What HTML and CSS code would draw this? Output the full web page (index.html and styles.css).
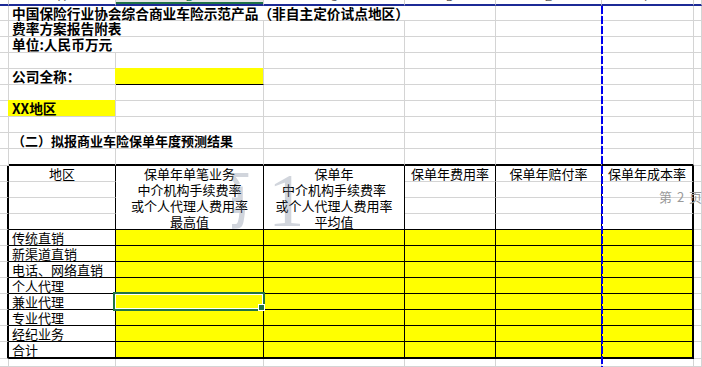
FILE: index.html
```html
<!DOCTYPE html>
<html lang="zh-CN">
<head>
<meta charset="utf-8">
<title>费率方案报告附表</title>
<link rel="stylesheet" href="styles.css">
</head>
<body>
<div class="sheet">
  <!-- column header strip -->
  <div class="c h"></div>
  <div class="c h"><span>A</span></div>
  <div class="c h selcol"><span>B</span></div>
  <div class="c h"><span>C</span></div>
  <div class="c h"><span>D</span></div>
  <div class="c h"><span>E</span></div>
  <div class="c h"><span>F</span></div>
  <div class="c h"></div>

  <!-- row 1 -->
  <div class="c"></div>
  <div class="c w4 t">中国保险行业协会综合商业车险示范产品（非自主定价试点地区）</div>
  <div class="c"></div><div class="c"></div><div class="c"></div>

  <!-- row 2 -->
  <div class="c"></div>
  <div class="c w2 t">费率方案报告附表</div>
  <div class="c"></div><div class="c"></div><div class="c"></div><div class="c"></div><div class="c"></div>

  <!-- row 3 -->
  <div class="c"></div>
  <div class="c w2 t">单位:人民币万元</div>
  <div class="c"></div><div class="c"></div><div class="c"></div><div class="c"></div><div class="c"></div>

  <!-- row 4 -->
  <div class="c"></div><div class="c"></div><div class="c"></div><div class="c"></div><div class="c"></div><div class="c"></div><div class="c"></div><div class="c"></div>

  <!-- row 5 -->
  <div class="c"></div>
  <div class="c t">公司全称：</div>
  <div class="c fo bb"></div>
  <div class="c"></div><div class="c"></div><div class="c"></div><div class="c"></div><div class="c"></div>

  <!-- row 6 -->
  <div class="c"></div><div class="c"></div><div class="c"></div><div class="c"></div><div class="c"></div><div class="c"></div><div class="c"></div><div class="c"></div>

  <!-- row 7 -->
  <div class="c"></div>
  <div class="c t fo">XX地区</div>
  <div class="c"></div><div class="c"></div><div class="c"></div><div class="c"></div><div class="c"></div><div class="c"></div>

  <!-- row 8 -->
  <div class="c"></div><div class="c"></div><div class="c"></div><div class="c"></div><div class="c"></div><div class="c"></div><div class="c"></div><div class="c"></div>

  <!-- row 9 -->
  <div class="c"></div>
  <div class="c w2 t s">（二）拟报商业车险保单年度预测结果</div>
  <div class="c"></div><div class="c"></div><div class="c"></div><div class="c"></div><div class="c"></div>

  <!-- row 10 (table top border) -->
  <div class="c"></div>
  <div class="c bb2"></div><div class="c bb2"></div><div class="c bb2"></div><div class="c bb2"></div><div class="c bb2"></div><div class="c bb2"></div>
  <div class="c"></div>

  <!-- table header rows 11-14 -->
  <div class="c tl"></div>
  <div class="c rb hd">地区</div>
  <div class="c m rb bb"><span>保单年单笔业务</span><span>中介机构手续费率</span><span>或个人代理人费用率</span><span>最高值</span></div>
  <div class="c m rb bb"><span>保单年</span><span>中介机构手续费率</span><span>或个人代理人费用率</span><span>平均值</span></div>
  <div class="c rb hd">保单年费用率</div>
  <div class="c rb hd">保单年赔付率</div>
  <div class="c rb2 hd">保单年成本率</div>
  <div class="c"></div>

  <div class="c tl"></div><div class="c rb"></div><div class="c rb"></div><div class="c rb"></div><div class="c rb2"></div><div class="c"></div>
  <div class="c tl"></div><div class="c rb"></div><div class="c rb"></div><div class="c rb"></div><div class="c rb2"></div><div class="c"></div>
  <div class="c tl"></div><div class="c rb bb"></div><div class="c rb bb"></div><div class="c rb bb"></div><div class="c rb2 bb"></div><div class="c"></div>

  <!-- data rows -->
  <div class="c tl"></div><div class="c rb bb lb">传统直销</div>
  <div class="c y rb bb"></div><div class="c y rb bb"></div><div class="c y rb bb"></div><div class="c y rb bb"></div><div class="c y rb2 bb"></div><div class="c"></div>

  <div class="c tl"></div><div class="c rb bb lb">新渠道直销</div>
  <div class="c y rb bb"></div><div class="c y rb bb"></div><div class="c y rb bb"></div><div class="c y rb bb"></div><div class="c y rb2 bb"></div><div class="c"></div>

  <div class="c tl"></div><div class="c rb bb lb">电话、网络直销</div>
  <div class="c y rb bb"></div><div class="c y rb bb"></div><div class="c y rb bb"></div><div class="c y rb bb"></div><div class="c y rb2 bb"></div><div class="c"></div>

  <div class="c tl"></div><div class="c rb bb lb">个人代理</div>
  <div class="c y rb bb"></div><div class="c y rb bb"></div><div class="c y rb bb"></div><div class="c y rb bb"></div><div class="c y rb2 bb"></div><div class="c"></div>

  <div class="c tl"></div><div class="c rb bb lb">兼业代理</div>
  <div class="c y rb bb cur"><span class="selbox"></span><span class="handle"></span></div><div class="c y rb bb"></div><div class="c y rb bb"></div><div class="c y rb bb"></div><div class="c y rb2 bb"></div><div class="c"></div>

  <div class="c tl"></div><div class="c rb bb lb">专业代理</div>
  <div class="c y rb bb"></div><div class="c y rb bb"></div><div class="c y rb bb"></div><div class="c y rb bb"></div><div class="c y rb2 bb"></div><div class="c"></div>

  <div class="c tl"></div><div class="c rb bb lb">经纪业务</div>
  <div class="c y rb bb"></div><div class="c y rb bb"></div><div class="c y rb bb"></div><div class="c y rb bb"></div><div class="c y rb2 bb"></div><div class="c"></div>

  <div class="c tl"></div><div class="c rb bb2 lb">合计</div>
  <div class="c y rb bb2"></div><div class="c y rb bb2"></div><div class="c y rb bb2"></div><div class="c y rb bb2"></div><div class="c y rb2 bb2"></div><div class="c"></div>

  <!-- row 23 -->
  <div class="c"></div><div class="c"></div><div class="c"></div><div class="c"></div><div class="c"></div><div class="c"></div><div class="c"></div><div class="c"></div>

  <!-- overlays -->
  <div class="wm"><span class="wm1">第</span><span class="wm2">1</span></div>
  <div class="pb"></div>
  <div class="pg">第 2 页</div>
</div>
</body>
</html>
```

FILE: styles.css
```css
* { box-sizing: border-box; margin: 0; padding: 0; }
html, body { width: 702px; height: 367px; overflow: hidden; background: #fff; }
body {
  font-family: "Noto Sans CJK SC", "Noto Sans", sans-serif;
  font-size: 13px;
  color: #000;
}

.sheet {
  position: relative;
  display: grid;
  grid-template-columns: 9px 107px 148px 141px 91px 106px 92px 1fr;
  grid-template-rows: 6px 15px repeat(8, 16px) 17px repeat(4, 16px) repeat(7, 16px) 17px 1fr;
  height: 367px;
}

.c {
  border-right: 1px solid #d4d4d4;
  border-bottom: 1px solid #d4d4d4;
  white-space: nowrap;
  line-height: 15px;
  min-width: 0;
}

/* column header strip */
.h {
  border-right: 1px solid #d0d0d0;
  border-bottom: 2px solid #1c2a96;
  overflow: hidden;
  text-align: center;
  font: 11px/12px "Liberation Sans", sans-serif;
  color: #5a5a5a;
}
.h span { display: block; margin-top: -9px; }
.h.selcol { box-shadow: inset 0 -2px 0 #217346; color: #217346; background: #e6e6e6; }

/* text cells */
.t { font-weight: 700; font-size: 13.7px; padding-left: 3px; }
.t.s { font-size: 13px; }
.w2 { grid-column: span 2; }
.w4 { grid-column: span 4; }
.fo { background: #ffff00; box-shadow: -1px -1px 0 0 #ffff00; }

/* table borders */
.rb { border-right-color: #000; }
.bb { border-bottom-color: #000; }
.rb2 { border-right: 2px solid #000; }
.bb2 { border-bottom: 2px solid #000; }
.tl { border-right: 2px solid #000; }

.hd { text-align: center; line-height: 16px; }
.m {
  grid-row: span 4;
  display: flex;
  flex-direction: column;
  align-items: center;
  line-height: 16px;
}
.lb { padding-left: 3px; }
.y { background: #ffff00; }

/* active cell */
.cur { position: relative; }
.selbox {
  position: absolute;
  left: -3px; top: -2px; right: -2px; bottom: -2px;
  border: 2px solid #217346;
  box-shadow: inset 0 0 0 1px #fff;
}
.handle {
  position: absolute;
  right: -2px; bottom: -2px;
  width: 7px; height: 7px;
  background: #217346;
  border: 1px solid #fff;
}

/* page break preview overlays */
.pb {
  position: absolute;
  left: 601px; top: 6px; bottom: 0;
  width: 2px;
  background: repeating-linear-gradient(to bottom, #0000ee 0 8px, transparent 8px 10px);
}
.pg {
  position: absolute;
  left: 659px; top: 189px;
  color: #9a9a9a;
  font-size: 13px;
  line-height: 16px;
  white-space: nowrap;
  word-spacing: 2px;
}
.wm {
  position: absolute;
  left: 232px; top: 162px;
  width: 68px; height: 70px;
  overflow: hidden;
  opacity: 0.35;
  color: #7d889e;
}
.wm1 { position: absolute; left: -50px; top: -2px; font-size: 70px; line-height: 72px; }
.wm2 { position: absolute; left: 36px; top: 0; font: 76px/76px "Liberation Serif", serif; }
```
